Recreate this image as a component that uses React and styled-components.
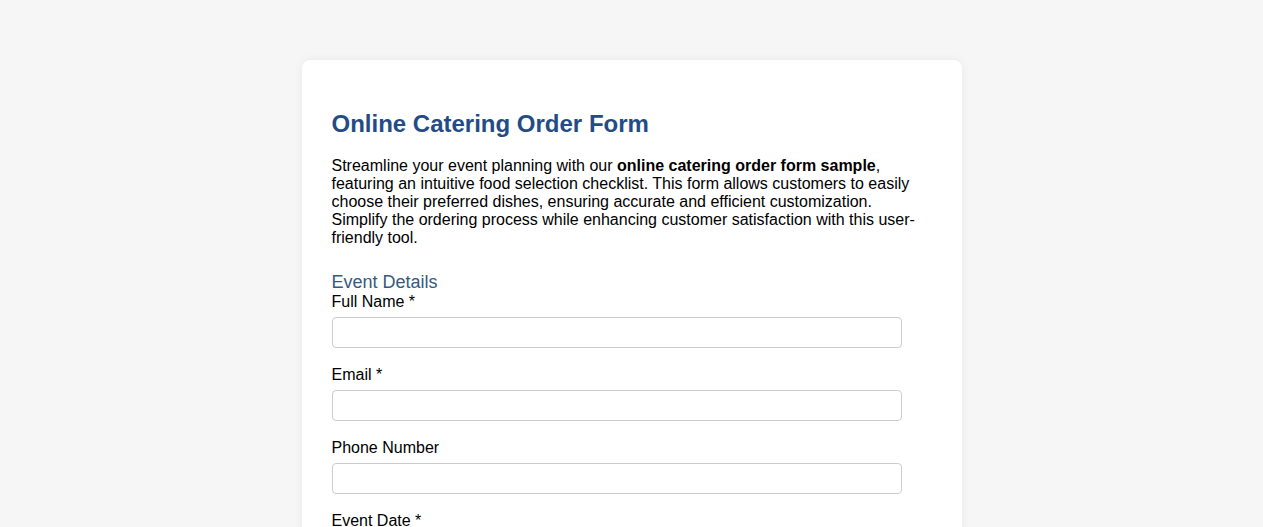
import React from 'react';
import styled, { createGlobalStyle } from 'styled-components';

const GlobalStyle = createGlobalStyle`
  body {
    margin: 0;
    background: #f6f6f6;
    font-family: "Liberation Sans", Arial, sans-serif;
    color: #000;
  }
`;

const Card = styled.div`
  width: 600px;
  margin: 60px auto 40px;
  padding: 30px;
  background: #fff;
  border-radius: 8px;
  box-shadow: 0 0 10px rgba(0, 0, 0, 0.06);
`;

const Title = styled.h2`
  margin: 20px 0 19px;
  font-size: 24px;
  line-height: 28px;
  font-weight: bold;
  color: #234c87;
`;

const Intro = styled.p`
  margin: 0;
  font-size: 16px;
  line-height: 18px;
`;

const Section = styled.h3`
  margin: 25px 0 0;
  font-size: 18px;
  line-height: 20px;
  font-weight: normal;
  color: #355a80;
`;

const Field = styled.div`
  margin-bottom: 17px;
`;

const Label = styled.label`
  display: block;
  margin-bottom: 5px;
  font-size: 16px;
  line-height: 20px;
`;

const Input = styled.input`
  display: block;
  box-sizing: border-box;
  width: 95%;
  height: 31px;
  padding: 6px 8px;
  border: 1px solid #ccc;
  border-radius: 4px;
  font-family: inherit;
  font-size: 14px;
  background: #fff;
`;

const fields = [
  { id: 'name', label: 'Full Name *', type: 'text' },
  { id: 'email', label: 'Email *', type: 'email' },
  { id: 'phone', label: 'Phone Number', type: 'tel' },
  { id: 'date', label: 'Event Date *', type: 'text' },
  { id: 'guests', label: 'Number of Guests *', type: 'text' },
];

export default function App() {
  return (
    <>
      <GlobalStyle />
      <Card>
        <Title>Online Catering Order Form</Title>
        <Intro>
          Streamline your event planning with our <strong>online catering order form sample</strong>,
          featuring an intuitive food selection checklist. This form allows customers to easily
          choose their preferred dishes, ensuring accurate and efficient customization. Simplify
          the ordering process while enhancing customer satisfaction with this user-friendly tool.
        </Intro>
        <Section>Event Details</Section>
        {fields.map((f) => (
          <Field key={f.id}>
            <Label htmlFor={f.id}>{f.label}</Label>
            <Input id={f.id} type={f.type} />
          </Field>
        ))}
      </Card>
    </>
  );
}
